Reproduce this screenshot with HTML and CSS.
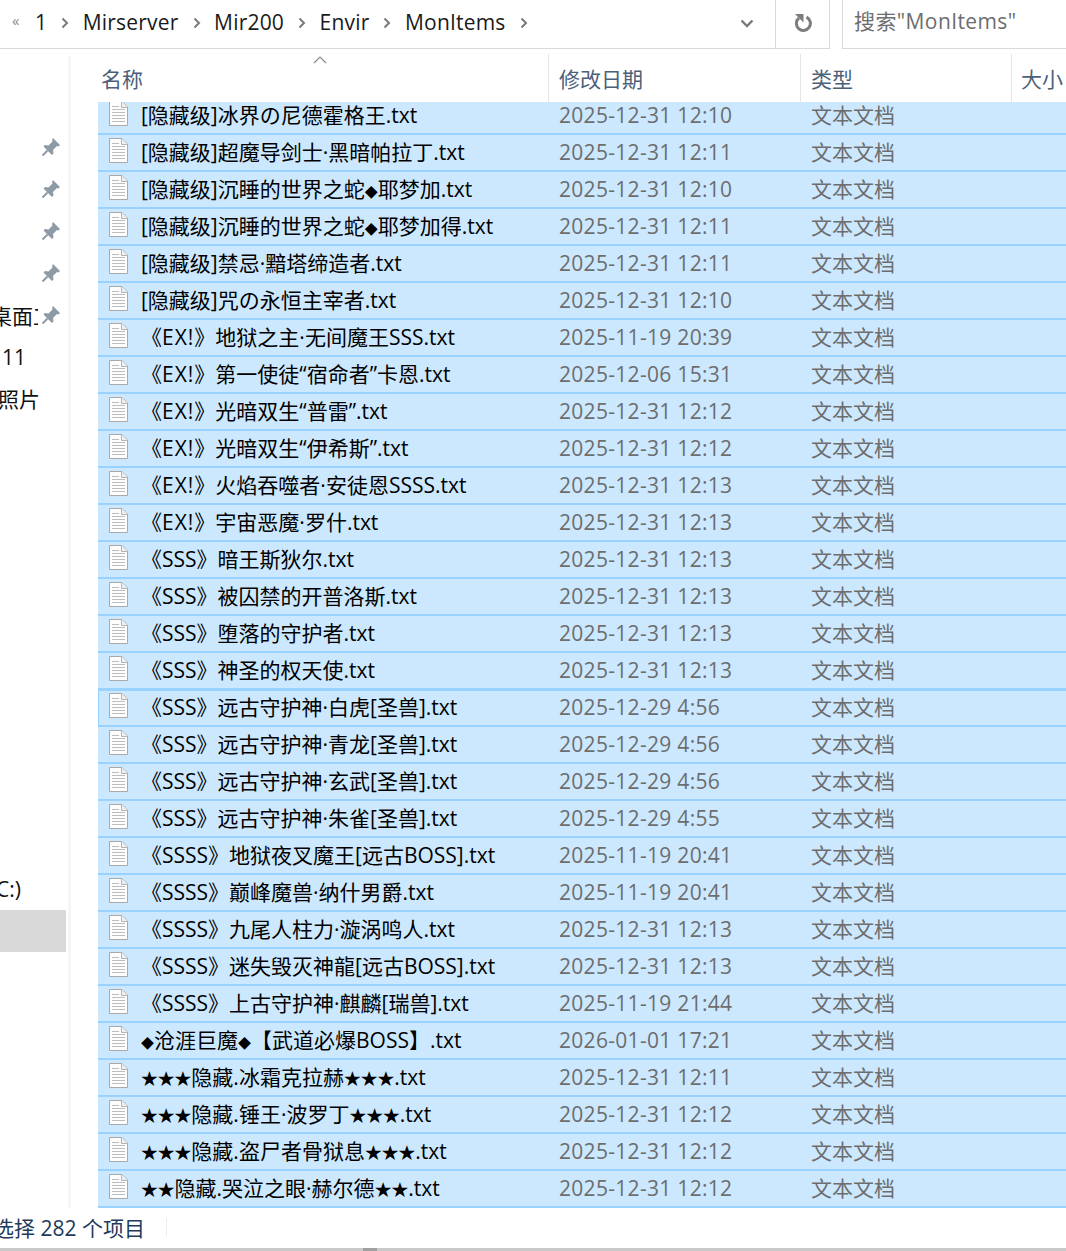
FILE: index.html
```html
<!DOCTYPE html>
<html lang="zh-CN">
<head>
    <meta charset="UTF-8">
    <title>MonItems</title>
    <link rel="stylesheet" href="styles.css">
</head>
<body>
    <svg class="defs" width="0" height="0">
        <symbol id="doc" viewBox="0 0 19 25">
            <path d="M.5.5H13L18.5 6V24.5H.5Z" fill="#fdfdfd" stroke="#a9a9a9"/>
            <path d="M12.5.5V6.5H18.5" fill="#efefef" stroke="#b5b5b5"/>
            <path d="M3 5.5H10M3 8.5H16M3 11.5H16M3 14.5H16M3 17.5H16M3 20.5H16" stroke="#bdbdbd"/>
        </symbol>
        <symbol id="pin" viewBox="0 0 20 20">
            <path d="M12 1L19 8L17.5 9.5L16 9L12 13L12.5 16.5L11 18L2.5 9.5L4 8L7.5 8.5L11.5 4.5L11 3Z" fill="#8e9aa6"/>
            <path d="M6.5 13.5L1.5 18.5" stroke="#8e9aa6" stroke-width="2"/>
        </symbol>
        <symbol id="chev" viewBox="0 0 8 12">
            <path d="M1.5 1.5L6 6L1.5 10.5" fill="none" stroke="#7a7a7a" stroke-width="2"/>
        </symbol>
    </svg>

    <div class="toolbar">
        <div class="address">
            <div class="crumbs">
                <span class="more">«</span>
                <span class="crumb">1</span>
                <svg class="chev"><use href="#chev"/></svg>
                <span class="crumb">Mirserver</span>
                <svg class="chev"><use href="#chev"/></svg>
                <span class="crumb">Mir200</span>
                <svg class="chev"><use href="#chev"/></svg>
                <span class="crumb">Envir</span>
                <svg class="chev"><use href="#chev"/></svg>
                <span class="crumb">MonItems</span>
                <svg class="chev"><use href="#chev"/></svg>
            </div>
            <div class="dropdown">
                <svg width="14" height="9" viewBox="0 0 14 9"><path d="M1.5 1.5L7 7L12.5 1.5" fill="none" stroke="#7a7a7a" stroke-width="2.4"/></svg>
            </div>
            <div class="refresh">
                <svg width="18" height="18" viewBox="0 0 18 18"><path d="M12.5 3.2A7 7 0 1 1 5 4" fill="none" stroke="#7d7d7d" stroke-width="3"/><path d="M1 0H9.5V8.5Z" fill="#7d7d7d"/></svg>
            </div>
        </div>
        <div class="search">搜索"MonItems"</div>
    </div>

    <div class="main">
        <div class="sidebar">
            <div class="nav-item"><svg class="pin"><use href="#pin"/></svg></div>
            <div class="nav-item"><svg class="pin"><use href="#pin"/></svg></div>
            <div class="nav-item"><svg class="pin"><use href="#pin"/></svg></div>
            <div class="nav-item"><svg class="pin"><use href="#pin"/></svg></div>
            <div class="nav-item"><span class="nav-label desk">桌面工具</span><svg class="pin"><use href="#pin"/></svg></div>
            <div class="nav-item"><span class="nav-label eleven">11</span></div>
            <div class="nav-item"><span class="nav-label photo">照片</span></div>
            <div class="nav-item drive"><span class="nav-label disk">C:)</span></div>
            <div class="nav-item active"></div>
        </div>

        <div class="files">
            <div class="head">
                <div class="col-name">名称<span class="sort"><svg width="14" height="8" viewBox="0 0 14 8"><path d="M1 7L7 1L13 7" fill="none" stroke="#8a8a8a" stroke-width="1.2"/></svg></span></div>
                <div class="col-date">修改日期</div>
                <div class="col-type">类型</div>
                <div class="col-size">大小</div>
            </div>
            <div class="rows">
                <div class="row"><svg class="doc"><use href="#doc"/></svg><span class="name">[隐藏级]冰界の尼德霍格王.txt</span><span class="date">2025-12-31 12:10</span><span class="type">文本文档</span></div>
                <div class="row"><svg class="doc"><use href="#doc"/></svg><span class="name">[隐藏级]超魔导剑士·黑暗帕拉丁.txt</span><span class="date">2025-12-31 12:11</span><span class="type">文本文档</span></div>
                <div class="row"><svg class="doc"><use href="#doc"/></svg><span class="name">[隐藏级]沉睡的世界之蛇<span class="dia">◆</span>耶梦加.txt</span><span class="date">2025-12-31 12:10</span><span class="type">文本文档</span></div>
                <div class="row"><svg class="doc"><use href="#doc"/></svg><span class="name">[隐藏级]沉睡的世界之蛇<span class="dia">◆</span>耶梦加得.txt</span><span class="date">2025-12-31 12:11</span><span class="type">文本文档</span></div>
                <div class="row"><svg class="doc"><use href="#doc"/></svg><span class="name">[隐藏级]禁忌·黯塔缔造者.txt</span><span class="date">2025-12-31 12:11</span><span class="type">文本文档</span></div>
                <div class="row"><svg class="doc"><use href="#doc"/></svg><span class="name">[隐藏级]咒の永恒主宰者.txt</span><span class="date">2025-12-31 12:10</span><span class="type">文本文档</span></div>
                <div class="row"><svg class="doc"><use href="#doc"/></svg><span class="name">《<span class="ex">EX!</span>》地狱之主·无间魔王SSS.txt</span><span class="date">2025-11-19 20:39</span><span class="type">文本文档</span></div>
                <div class="row"><svg class="doc"><use href="#doc"/></svg><span class="name">《<span class="ex">EX!</span>》第一使徒“宿命者”卡恩.txt</span><span class="date">2025-12-06 15:31</span><span class="type">文本文档</span></div>
                <div class="row"><svg class="doc"><use href="#doc"/></svg><span class="name">《<span class="ex">EX!</span>》光暗双生“普雷”.txt</span><span class="date">2025-12-31 12:12</span><span class="type">文本文档</span></div>
                <div class="row"><svg class="doc"><use href="#doc"/></svg><span class="name">《<span class="ex">EX!</span>》光暗双生“伊希斯”.txt</span><span class="date">2025-12-31 12:12</span><span class="type">文本文档</span></div>
                <div class="row"><svg class="doc"><use href="#doc"/></svg><span class="name">《<span class="ex">EX!</span>》火焰吞噬者·安徒恩SSSS.txt</span><span class="date">2025-12-31 12:13</span><span class="type">文本文档</span></div>
                <div class="row"><svg class="doc"><use href="#doc"/></svg><span class="name">《<span class="ex">EX!</span>》宇宙恶魔·罗什.txt</span><span class="date">2025-12-31 12:13</span><span class="type">文本文档</span></div>
                <div class="row"><svg class="doc"><use href="#doc"/></svg><span class="name">《SSS》暗王斯狄尔.txt</span><span class="date">2025-12-31 12:13</span><span class="type">文本文档</span></div>
                <div class="row"><svg class="doc"><use href="#doc"/></svg><span class="name">《SSS》被囚禁的开普洛斯.txt</span><span class="date">2025-12-31 12:13</span><span class="type">文本文档</span></div>
                <div class="row"><svg class="doc"><use href="#doc"/></svg><span class="name">《SSS》堕落的守护者.txt</span><span class="date">2025-12-31 12:13</span><span class="type">文本文档</span></div>
                <div class="row"><svg class="doc"><use href="#doc"/></svg><span class="name">《SSS》神圣的权天使.txt</span><span class="date">2025-12-31 12:13</span><span class="type">文本文档</span></div>
                <div class="row focus"><svg class="doc"><use href="#doc"/></svg><span class="name">《SSS》远古守护神·白虎[圣兽].txt</span><span class="date">2025-12-29 4:56</span><span class="type">文本文档</span></div>
                <div class="row"><svg class="doc"><use href="#doc"/></svg><span class="name">《SSS》远古守护神·青龙[圣兽].txt</span><span class="date">2025-12-29 4:56</span><span class="type">文本文档</span></div>
                <div class="row"><svg class="doc"><use href="#doc"/></svg><span class="name">《SSS》远古守护神·玄武[圣兽].txt</span><span class="date">2025-12-29 4:56</span><span class="type">文本文档</span></div>
                <div class="row"><svg class="doc"><use href="#doc"/></svg><span class="name">《SSS》远古守护神·朱雀[圣兽].txt</span><span class="date">2025-12-29 4:55</span><span class="type">文本文档</span></div>
                <div class="row"><svg class="doc"><use href="#doc"/></svg><span class="name">《SSSS》地狱夜叉魔王[远古BOSS].txt</span><span class="date">2025-11-19 20:41</span><span class="type">文本文档</span></div>
                <div class="row"><svg class="doc"><use href="#doc"/></svg><span class="name">《SSSS》巅峰魔兽·纳什男爵.txt</span><span class="date">2025-11-19 20:41</span><span class="type">文本文档</span></div>
                <div class="row"><svg class="doc"><use href="#doc"/></svg><span class="name">《SSSS》九尾人柱力·漩涡鸣人.txt</span><span class="date">2025-12-31 12:13</span><span class="type">文本文档</span></div>
                <div class="row"><svg class="doc"><use href="#doc"/></svg><span class="name">《SSSS》迷失毁灭神龍[远古BOSS].txt</span><span class="date">2025-12-31 12:13</span><span class="type">文本文档</span></div>
                <div class="row"><svg class="doc"><use href="#doc"/></svg><span class="name">《SSSS》上古守护神·麒麟[瑞兽].txt</span><span class="date">2025-11-19 21:44</span><span class="type">文本文档</span></div>
                <div class="row"><svg class="doc"><use href="#doc"/></svg><span class="name"><span class="dia">◆</span>沧涯巨魔<span class="dia">◆</span>【武道必爆BOSS】.txt</span><span class="date">2026-01-01 17:21</span><span class="type">文本文档</span></div>
                <div class="row"><svg class="doc"><use href="#doc"/></svg><span class="name"><span class="star">★★★</span>隐藏.冰霜克拉赫<span class="star">★★★</span>.txt</span><span class="date">2025-12-31 12:11</span><span class="type">文本文档</span></div>
                <div class="row"><svg class="doc"><use href="#doc"/></svg><span class="name"><span class="star">★★★</span>隐藏.锤王·波罗丁<span class="star">★★★</span>.txt</span><span class="date">2025-12-31 12:12</span><span class="type">文本文档</span></div>
                <div class="row"><svg class="doc"><use href="#doc"/></svg><span class="name"><span class="star">★★★</span>隐藏.盗尸者骨狱息<span class="star">★★★</span>.txt</span><span class="date">2025-12-31 12:12</span><span class="type">文本文档</span></div>
                <div class="row"><svg class="doc"><use href="#doc"/></svg><span class="name"><span class="star">★★</span>隐藏.哭泣之眼·赫尔德<span class="star">★★</span>.txt</span><span class="date">2025-12-31 12:12</span><span class="type">文本文档</span></div>
            </div>
        </div>
    </div>

    <div class="status">
        <span class="count">选择 282 个项目</span>
        <span class="status-sep"></span>
    </div>
    <div class="scrollbar"><span class="thumb"></span></div>
</body>
</html>
```

FILE: styles.css
```css
* {
    box-sizing: border-box;
}

body {
    margin: 0;
    height: 1251px;
    overflow: hidden;
    background: #fff;
    font-family: "Open Sans", "Noto Sans CJK SC", sans-serif;
    font-size: 21px;
    color: #000;
}

.defs {
    position: absolute;
}

/* address bar */
.toolbar {
    display: flex;
    height: 49px;
}

.address {
    display: flex;
    width: 830px;
    border-bottom: 1px solid #d9d9d9;
    border-right: 1px solid #d9d9d9;
}

.crumbs {
    flex: 1;
    display: flex;
    align-items: center;
    padding-left: 12px;
    padding-bottom: 5px;
    color: #1a1a1a;
}

.more {
    width: 23px;
    margin-top: -4px;
    font-size: 15px;
    color: #8a8a8a;
}

.crumb {
    letter-spacing: .2px;
    white-space: nowrap;
}

.chev {
    width: 8px;
    height: 12px;
    margin: 2px 13.5px 0 14px;
}

.dropdown {
    display: flex;
    align-items: center;
    width: 54px;
    padding-left: 19px;
    padding-bottom: 2px;
}

.refresh {
    width: 54px;
    display: flex;
    align-items: center;
    justify-content: center;
    padding-bottom: 2px;
    border-left: 1px solid #d9d9d9;
}

.search {
    flex: 1;
    margin-left: 12px;
    padding-left: 11px;
    line-height: 42px;
    letter-spacing: .4px;
    color: #6d6d6d;
    border-left: 1px solid #d9d9d9;
    border-bottom: 1px solid #d9d9d9;
    white-space: nowrap;
}

.main {
    display: flex;
    height: 1159px;
}

/* nav pane */
.sidebar {
    position: relative;
    width: 71px;
    flex-shrink: 0;
    margin-top: 7px;
    padding-top: 70px;
    padding-right: 2px;
    border-right: 3px solid #f5f5f5;
}

.nav-item {
    height: 42px;
    display: flex;
    align-items: center;
    overflow: hidden;
}

.nav-item .pin {
    position: absolute;
    left: 41px;
    width: 20px;
    height: 20px;
}

.nav-label {
    white-space: nowrap;
    overflow: hidden;
    flex-shrink: 0;
    color: #111;
}

.desk {
    width: 47px;
    margin-left: -9px;
}

.eleven {
    margin-left: 2px;
}

.photo {
    margin-left: -2px;
    margin-bottom: 2px;
}

.drive {
    margin-top: 448px;
}

.disk {
    margin-left: -4px;
}

.active {
    background: #d9d9d9;
}

/* file list */
.files {
    flex: 1;
    min-width: 0;
    padding-left: 27px;
}

.head {
    display: flex;
    height: 53px;
    padding-top: 5px;
    color: #4c607a;
    margin-left: -27px;
    padding-left: 27px;
}

.head > div {
    display: flex;
    align-items: center;
    padding-left: 10px;
    white-space: nowrap;
    border-left: 1px solid #e5e5e5;
}

.head .col-name {
    position: relative;
    width: 450px;
    padding-left: 3px;
    border-left: 0;
}

.head .col-date {
    width: 252px;
}

.head .col-type {
    width: 211px;
}

.head .col-size {
    flex: 1;
    padding-left: 9px;
    overflow: hidden;
}

.sort {
    position: absolute;
    left: 215px;
    top: -2px;
    line-height: 8px;
}

.rows {
    overflow: hidden;
}

.row {
    display: flex;
    align-items: center;
    height: 37px;
    background: #cce8ff;
    border-bottom: 2px solid #99d1ff;
    white-space: nowrap;
}

/* list is scrolled a little */
.row:first-child {
    margin-top: -4px;
}

.row.focus {
    box-shadow: inset 1px 0 0 #99d1ff, inset 0 1px 0 #99d1ff;
}

.doc {
    width: 19px;
    height: 25px;
    margin-left: 11px;
    margin-right: 13px;
    margin-bottom: 4px;
    flex-shrink: 0;
}

.name {
    width: 418px;
    flex-shrink: 0;
    margin-bottom: 4px;
}

.date {
    width: 252px;
    margin-bottom: 2px;
    color: #6d6d6d;
    letter-spacing: .3px;
}

.type {
    margin-bottom: 4px;
    color: #6d6d6d;
}

.dia {
    font-size: 13px;
}

.star {
    font-size: 16.8px;
}

.ex {
    letter-spacing: 1px;
}

/* status bar */
.status {
    display: flex;
    align-items: center;
    height: 40px;
    padding-bottom: 2px;
    color: #1f3b5c;
}

.count {
    margin-left: -7px;
}

.status-sep {
    width: 1px;
    height: 18px;
    margin-left: 21px;
    background: #ececec;
}

.scrollbar {
    height: 3px;
    background: #c9c9c9;
    padding-left: 363px;
}

.thumb {
    display: block;
    width: 14px;
    height: 3px;
    background: #a0a0a0;
}
```
